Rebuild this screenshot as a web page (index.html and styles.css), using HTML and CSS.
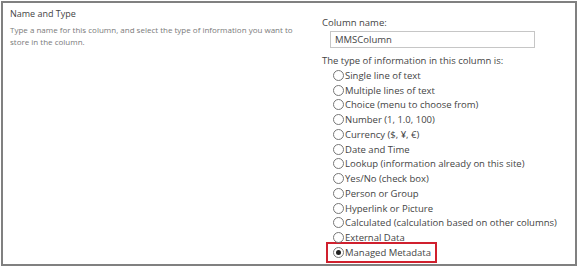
FILE: index.html
```html
<!DOCTYPE html>
<html lang="en">

<head>
    <meta charset="UTF-8">
    <title>Name and Type</title>
    <link rel="stylesheet" href="styles.css">
</head>

<body>
    <div class="frame">
        <div class="section">
            <div class="desc">
                <h3 class="title">Name and Type</h3>
                <p class="help">Type a name for this column, and select the type of information you want to store in the column.</p>
            </div>
            <div class="fields">
                <label class="label" for="colname">Column name:</label>
                <input class="textbox" id="colname" type="text" value="MMSColumn">
                <p class="label">The type of information in this column is:</p>
                <ul class="types">
                    <li><span class="radio"></span>Single line of text</li>
                    <li><span class="radio"></span>Multiple lines of text</li>
                    <li><span class="radio"></span>Choice (menu to choose from)</li>
                    <li><span class="radio"></span>Number (1, 1.0, 100)</li>
                    <li><span class="radio"></span>Currency ($, ¥, €)</li>
                    <li><span class="radio"></span>Date and Time</li>
                    <li><span class="radio"></span>Lookup (information already on this site)</li>
                    <li><span class="radio"></span>Yes/No (check box)</li>
                    <li><span class="radio"></span>Person or Group</li>
                    <li><span class="radio"></span>Hyperlink or Picture</li>
                    <li><span class="radio"></span>Calculated (calculation based on other columns)</li>
                    <li><span class="radio"></span>External Data</li>
                    <li class="picked"><span class="radio on"></span>Managed Metadata</li>
                </ul>
            </div>
        </div>
    </div>
</body>

</html>
```

FILE: styles.css
```css
* {
    margin: 0;
    padding: 0;
    box-sizing: border-box;
}

body {
    background-color: #fff;
    padding: 1px;
    font-family: "Open Sans", "Noto Sans", sans-serif;
    color: #444;
}

.frame {
    width: 576px;
    height: 265px;
    border: 2px solid #808080;
    overflow: hidden;
}

.section {
    display: grid;
    grid-template-columns: 310px 1fr;
}

.desc {
    padding: 4px 0 0 7px;
}

.title {
    font-size: 9px;
    font-weight: normal;
    color: #444;
    line-height: 14px;
}

.help {
    margin-top: 3px;
    font-size: 8px;
    line-height: 12px;
    color: #7a7a7a;
    padding-right: 8px;
}

.fields {
    padding: 13px 0 0 9px;
    font-size: 9.5px;
}

.label {
    display: block;
    line-height: 13px;
    color: #444;
}

.textbox {
    display: block;
    width: 205px;
    height: 17px;
    margin: 2px 0 6px 8px;
    border: 1px solid #c6c6c6;
    padding: 0 4px;
    font: inherit;
    color: #444;
}

.types {
    list-style: none;
    margin-top: 1px;
    padding-left: 11px;
}

.types li {
    display: flex;
    align-items: center;
    height: 14.75px;
    color: #444;
}

.radio {
    width: 11px;
    height: 11px;
    border: 1px solid #777;
    border-radius: 50%;
    margin-right: 1px;
    position: relative;
}

.radio.on:after {
    content: "";
    position: absolute;
    left: 2px;
    top: 2px;
    width: 5px;
    height: 5px;
    border-radius: 50%;
    background-color: #222;
}

.types .picked {
    border: 2px solid #d0202e;
    margin-left: -7px;
    padding-left: 5px;
    width: 111px;
    height: 21px;
    margin-top: -3px;
}
```
